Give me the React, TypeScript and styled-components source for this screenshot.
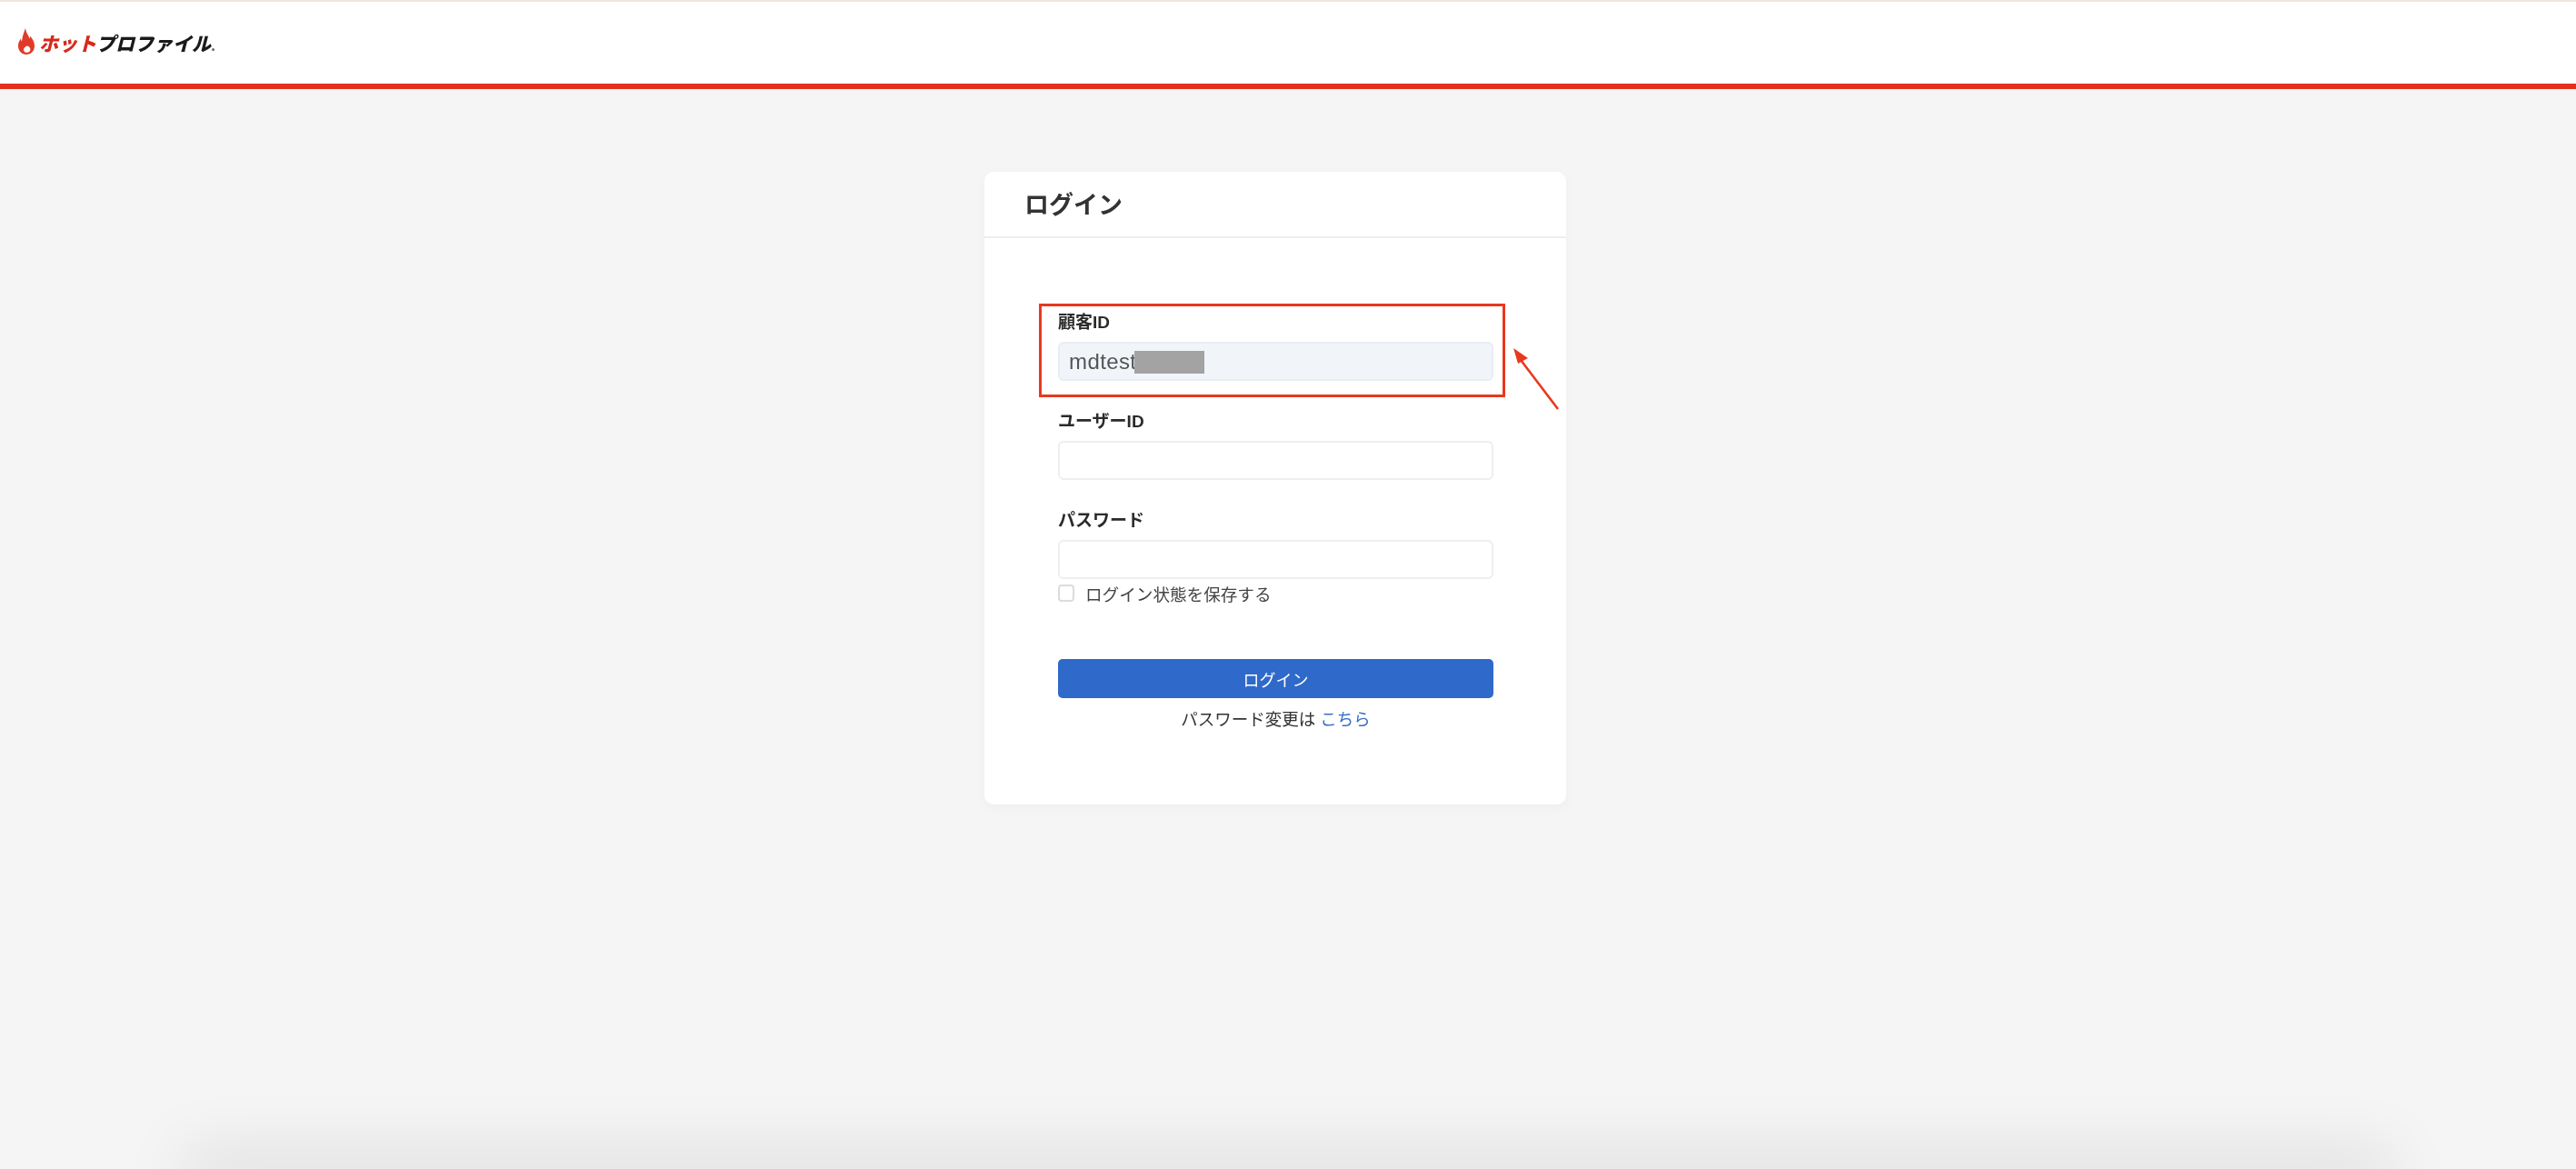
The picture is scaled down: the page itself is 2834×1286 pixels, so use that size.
import React from "react";
import styled, { createGlobalStyle } from "styled-components";

const Global = createGlobalStyle`
  html, body { margin: 0; padding: 0; background: #f5f5f5; }
  * { box-sizing: border-box; }
`;

const Page = styled.div`
  width: 2834px;
  height: 1286px;
  overflow: hidden;
  display: flex;
  flex-direction: column;
  align-items: center;
  background: #f5f5f5;
  font-family: "Liberation Sans", "Noto Sans CJK JP", sans-serif;
  color: #2b2b2b;
  filter: blur(0.7px);
`;

const Header = styled.header`
  width: 100%;
  height: 98px;
  flex: none;
  display: flex;
  align-items: center;
  padding: 0 0 3px 20px;
  background: #fff;
  border-top: 2px solid #ece7db;
  border-bottom: 6px solid #e2301f;
`;

const Logo = styled.div`
  display: flex;
  align-items: flex-end;
  gap: 5px;
`;

const LogoText = styled.span<{ $red?: boolean }>`
  font-family: "Noto Sans CJK JP", sans-serif;
  font-size: 21px;
  line-height: 26px;
  font-weight: 900;
  font-style: italic;
  color: ${(p) => (p.$red ? "#d8281c" : "#1a1a1a")};
`;

const LogoWord = styled.div`
  display: flex;
  align-items: baseline;
`;

const LogoDot = styled.span`
  width: 3px;
  height: 3px;
  margin-left: 1px;
  border-radius: 50%;
  background: #666;
`;

const Card = styled.main`
  width: 640px;
  height: 696px;
  margin-top: 91px;
  margin-left: -28px;
  flex: none;
  background: #fff;
  border-radius: 10px;
  box-shadow: 0 4px 14px rgba(0, 0, 0, 0.03);
`;

const CardHeader = styled.div`
  height: 73px;
  display: flex;
  align-items: center;
  padding: 0 0 2px 44px;
  border-bottom: 2px solid #eeeeee;
`;

const Title = styled.h1`
  margin: 0;
  font-size: 27px;
  font-weight: 700;
  color: #333;
`;

const Form = styled.form`
  padding: 77px 80px 0 81px;
  display: flex;
  flex-direction: column;
`;

const Field = styled.div<{ $last?: boolean }>`
  position: relative;
  display: flex;
  flex-direction: column;
  gap: 5px;
  margin-bottom: ${(p) => (p.$last ? "0" : "29px")};
`;

const Label = styled.label`
  height: 32px;
  line-height: 32px;
  font-size: 19px;
  font-weight: 700;
  color: #2b2b2b;
`;

const Input = styled.input<{ $filled?: boolean }>`
  width: 100%;
  height: 43px;
  padding: 0 10px;
  font-family: "Liberation Sans", sans-serif;
  font-size: 24px;
  letter-spacing: 0.4px;
  color: #555;
  background: ${(p) => (p.$filled ? "#f1f5fa" : "#fff")};
  border: 2px solid ${(p) => (p.$filled ? "#e8edf3" : "#eeeeee")};
  border-radius: 6px;
  outline: none;
`;

const Redaction = styled.span`
  position: absolute;
  left: 84px;
  top: 47px;
  width: 77px;
  height: 25px;
  background: #a3a3a3;
`;

const Highlight = styled.span`
  position: absolute;
  left: -21px;
  top: -5px;
  width: 513px;
  height: 103px;
  border: 3px solid #e8391f;
  pointer-events: none;
`;

const ArrowMark = styled.svg`
  position: absolute;
  left: 498px;
  top: 41px;
  width: 60px;
  height: 76px;
`;

const CheckRow = styled.div`
  display: flex;
  align-items: center;
  gap: 12px;
  height: 20px;
  margin-top: 5px;
  font-size: 18.6px;
  color: #444;
`;

const Check = styled.input.attrs({ type: "checkbox" })`
  appearance: none;
  width: 18px;
  height: 19px;
  margin: 0;
  background: #fff;
  border: 2px solid #dcdcdc;
  border-radius: 4px;
`;

const Submit = styled.button`
  width: 100%;
  height: 43px;
  margin-top: 63px;
  border: none;
  border-radius: 5px;
  background: #2f69c9;
  color: #fff;
  font-family: inherit;
  font-size: 18px;
`;

const ChangeLine = styled.p`
  margin: 12px 0 0;
  height: 24px;
  line-height: 24px;
  text-align: center;
  font-size: 18.5px;
  color: #333;
`;

const Link = styled.a`
  color: #3a6fc4;
  text-decoration: none;
`;

const BottomShade = styled.div`
  width: 2400px;
  height: 4px;
  margin-top: auto;
  margin-bottom: -4px;
  flex: none;
  box-shadow: 0 0 70px 16px rgba(0, 0, 0, 0.13);
`;

export default function App() {
  return (
    <>
      <Global />
      <Page>
        <Header>
          <Logo>
            <svg width="18" height="29" viewBox="0 0 18 29" aria-hidden="true">
              <path
                fill="#e23a28"
                fillRule="evenodd"
                d="M8 0c.6 3.500 1.600 5.500 3 8 .7 1.200 1.300 2.400 1.500 3.600.6-1 .8-2 .7-3.100C16 12 18 15.500 18 19.500 18 25 14 29 9 29S0 25 0 19.500c0-2.800 1-5.400 2.800-8 .1 1.300.5 2.300 1.200 3.100C4.500 9.500 6.300 4.500 8 0zM9.500 26.800c2.400 0 3.900-1.500 3.900-3.500 0-1.900-1.500-3.200-3.400-3.800-1.700.6-4 2-4 3.900 0 2 1.500 3.400 3.500 3.400z"
              />
            </svg>
            <LogoWord>
              <LogoText $red>ホット</LogoText>
              <LogoText>プロファイル</LogoText>
              <LogoDot />
            </LogoWord>
          </Logo>
        </Header>
        <Card>
          <CardHeader>
            <Title>ログイン</Title>
          </CardHeader>
          <Form>
            <Field>
              <Label>顧客ID</Label>
              <Input $filled readOnly value="mdtest" />
              <Redaction />
              <Highlight />
              <ArrowMark viewBox="0 0 60 76" aria-hidden="true">
                <path d="M52 70 L8 12" stroke="#e8391f" strokeWidth="2.600" fill="none" />
                <path d="M3 3 L19 14 L8 20 Z" fill="#e8391f" />
              </ArrowMark>
            </Field>
            <Field>
              <Label>ユーザーID</Label>
              <Input readOnly />
            </Field>
            <Field $last>
              <Label>パスワード</Label>
              <Input readOnly type="password" />
            </Field>
            <CheckRow>
              <Check />
              <span>ログイン状態を保存する</span>
            </CheckRow>
            <Submit type="button">ログイン</Submit>
            <ChangeLine>
              パスワード変更は <Link href="#">こちら</Link>
            </ChangeLine>
          </Form>
        </Card>
        <BottomShade />
      </Page>
    </>
  );
}
